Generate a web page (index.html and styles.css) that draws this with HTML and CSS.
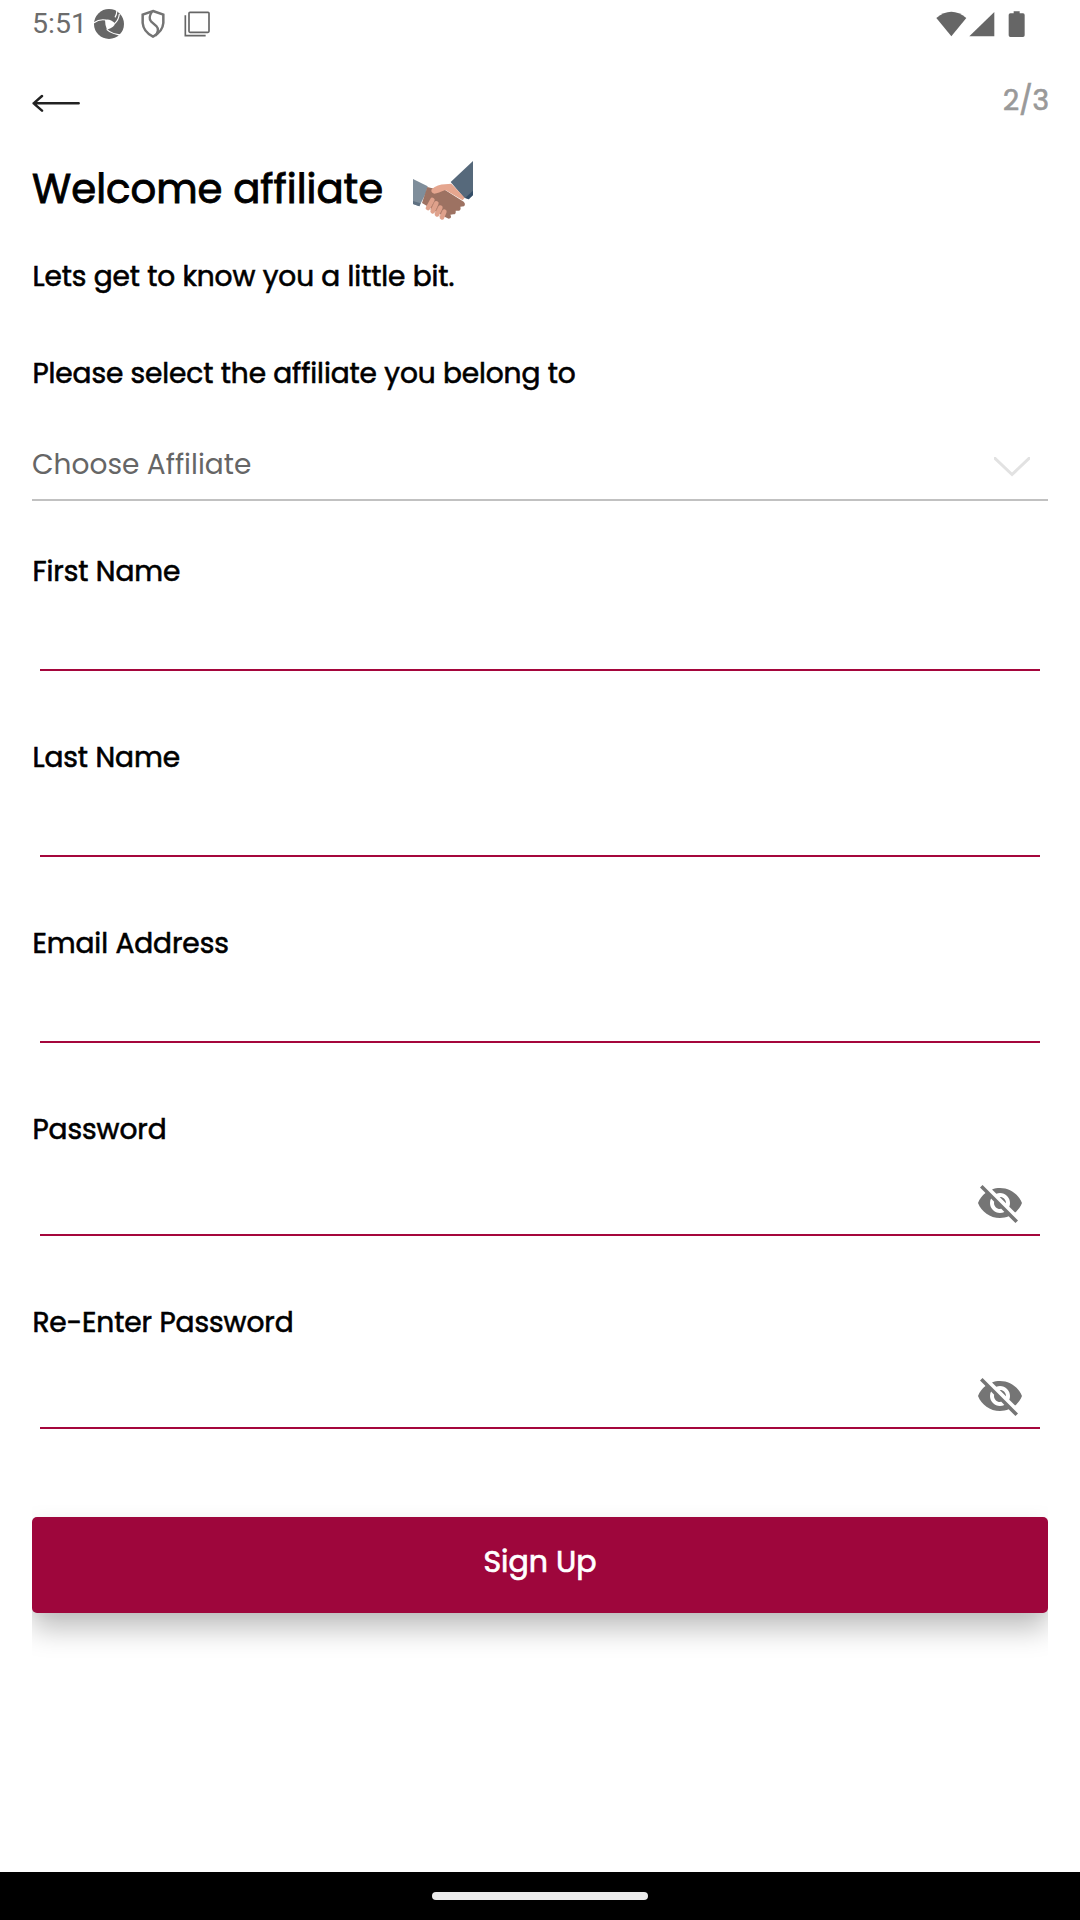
FILE: index.html
```html
<!DOCTYPE html>
<html lang="en">
<head>
<meta charset="utf-8">
<title>Sign Up</title>
<link rel="stylesheet" href="styles.css">
</head>
<body>
<div class="screen">
  <header class="status">
    <div class="status-left">
      <span class="clock">5:51</span>
      <svg class="ic-pinwheel" width="32" height="32" viewBox="0 0 96 96">
        <circle cx="48" cy="48" r="45" fill="#666"/>
        <path d="M36 35Q52 31 66 46Q66 57 42 65Q36 52 36 35Z" fill="#fff"/>
        <g fill="none" stroke="#fff" stroke-width="3.500"><path d="M3 44Q18 33 38 36"/><path d="M66 28Q71 20 72 7"/><path d="M65 47Q77 36 79 18"/><path d="M41 64Q56 79 92 82"/></g>
      </svg>
      <svg class="ic-shield" width="24" height="30" viewBox="0 0 72 90">
        <path d="M36 6 67 17V42Q65 68 36 83Q7 68 5 42V17Z" fill="none" stroke="#747474" stroke-width="7.500"/>
        <path d="M33 8Q21 26 30 37L46 51Q57 63 43 80" fill="none" stroke="#747474" stroke-width="7"/>
      </svg>
      <svg class="ic-copy" width="26" height="26" viewBox="0 0 78 78">
        <rect x="15" y="4" width="60" height="60" rx="3" fill="none" stroke="#666" stroke-width="5"/>
        <path d="M4 13V74H65" fill="none" stroke="#666" stroke-width="5"/>
      </svg>
    </div>
    <svg width="90" height="26" viewBox="0 0 270 78" fill="#666">
      <path d="M1 21Q46-17 91 21L46 76Z"/><path d="M100 76 175 3V76Z"/>
      <path d="M233 1H251V7H261Q266 7 266 12V73Q266 78 261 78H223Q218 78 218 73V12Q218 7 223 7H233Z"/>
    </svg>
  </header>

  <nav class="topbar">
    <svg width="50" height="20" viewBox="0 0 150 60" fill="none" stroke="#222" stroke-width="7.500" stroke-linecap="round" stroke-linejoin="round"><path d="M140 28H5M30 6 5 28 30 50"/></svg>
    <span class="step">2/3</span>
  </nav>

  <main class="content">
    <div class="title-row">
      <h1>Welcome affiliate</h1>
      <svg width="60" height="60" viewBox="69 62 180 180">
        <path d="M69 116 113 138 108 158 88 198 69 191Z" fill="#7f8e9b"/>
        <path d="M69 182 92 189 88 198 69 191Z" fill="#5f7182"/>
        <path d="M249 62V164L236 177 222 172 182 125Z" fill="#56697b"/>
        <path d="M249 151V164L236 177 226 172Z" fill="#344e68"/>
        <path d="M112 140 133 145 164 148 221 184Q228 191 222 198L211 199Q214 208 207 211L197 211Q199 222 190 222L181 223Q187 233 176 235L165 230 96 188Z" fill="#9d7262"/>
        <path d="M125 147Q143 132 165 132L184 130 224 172 218 180 166 149Q145 158 133 160 121 157 125 147Z" fill="#e5a68f"/>
        <g fill="none" stroke="#dfa18b" stroke-width="14" stroke-linecap="round"><path d="M127 179 114 203"/><path d="M139 189 128 213"/><path d="M151 202 141 222"/><path d="M163 214 156 231"/></g>
        <g fill="none" stroke="#c98c77" stroke-width="1.5"><path d="M133 184 121 209"/><path d="M146 196 134 219"/><path d="M158 209 148 229"/></g>
      </svg>
    </div>
    <p class="line intro">Lets get to know you a little bit.</p>
    <p class="line prompt">Please select the affiliate you belong to</p>
    <div class="select">
      <span class="line placeholder">Choose Affiliate</span>
      <svg width="36" height="20" viewBox="0 0 36 20" fill="none" stroke="#e2e2e2" stroke-width="3"><path d="M-1-.5 18 17.500 37-.5"/></svg>
    </div>

    <label class="field"><span class="line">First Name</span><span class="input"></span></label>
    <label class="field"><span class="line">Last Name</span><span class="input"></span></label>
    <label class="field"><span class="line">Email Address</span><span class="input"></span></label>
    <label class="field secret"><span class="line">Password</span><span class="input"><svg class="eye" width="48" height="48" viewBox="0 0 24 24"><path d="M12 7c2.760 0 5 2.240 5 5 0 .65-.13 1.260-.36 1.830l2.920 2.920c1.510-1.260 2.700-2.890 3.430-4.750-1.730-4.390-6-7.500-11-7.500-1.400 0-2.740.25-3.980.7l2.160 2.160C10.740 7.130 11.350 7 12 7zM2 4.270l2.280 2.280.46.46C3.080 8.300 1.780 10.020 1 12c1.730 4.390 6 7.500 11 7.500 1.550 0 3.030-.3 4.380-.84l.42.42L19.730 22 21 20.730 3.270 3 2 4.270zM7.530 9.800l1.550 1.550c-.05.21-.08.43-.08.65 0 1.660 1.340 3 3 3 .22 0 .44-.03.65-.08l1.550 1.550c-.67.33-1.410.53-2.200.53-2.760 0-5-2.240-5-5 0-.79.2-1.530.53-2.200zm4.310-.78l3.150 3.150.02-.16c0-1.660-1.340-3-3-3l-.17.010z"/></svg></span></label>
    <label class="field secret"><span class="line">Re-Enter Password</span><span class="input"><svg class="eye" width="48" height="48" viewBox="0 0 24 24"><path d="M12 7c2.760 0 5 2.240 5 5 0 .65-.13 1.260-.36 1.830l2.920 2.920c1.510-1.260 2.700-2.890 3.430-4.750-1.730-4.390-6-7.500-11-7.500-1.400 0-2.740.25-3.980.7l2.160 2.160C10.740 7.130 11.350 7 12 7zM2 4.270l2.280 2.280.46.46C3.080 8.300 1.780 10.020 1 12c1.730 4.390 6 7.500 11 7.500 1.550 0 3.030-.3 4.380-.84l.42.42L19.730 22 21 20.730 3.270 3 2 4.270zM7.530 9.800l1.550 1.550c-.05.21-.08.43-.08.65 0 1.660 1.340 3 3 3 .22 0 .44-.03.65-.08l1.550 1.550c-.67.33-1.410.53-2.200.53-2.760 0-5-2.240-5-5 0-.79.2-1.530.53-2.200zm4.310-.78l3.150 3.150.02-.16c0-1.660-1.340-3-3-3l-.17.010z"/></svg></span></label>

    <div class="action"><button class="signup">Sign Up</button></div>
  </main>

  <footer class="navbar"><span class="pill"></span></footer>
</div>
</body>
</html>
```

FILE: styles.css
```css
* { box-sizing: border-box; margin: 0; }
body { background: #fff; color: #000; font-family: Poppins, Inter, "Open Sans", sans-serif; }
svg { display: block; flex: none; }
.screen { width: 1080px; height: 1920px; display: flex; flex-direction: column; overflow: hidden; }

.status { height: 48px; padding: 0 54px 0 32px; display: flex; justify-content: space-between; align-items: center; }
.status-left { display: flex; align-items: center; }
.clock { width: 61px; font: 400 28.5px/48px Roboto, sans-serif; color: #6c6c6c; }
.ic-shield { margin-left: 16px; }
.ic-copy { margin-left: 19px; }

.topbar { height: 104px; padding: 0 31px 0 32px; display: flex; justify-content: space-between; }
.topbar svg { margin-top: 46px; }
.step { margin-top: 33px; font-size: 28px; font-weight: 400; line-height: 40px; color: #999; -webkit-text-stroke: .7px #999; }

.content { flex: 1; padding: 0 32px; }
.title-row { height: 105px; display: flex; align-items: flex-start; padding-top: 9px; }
h1 { width: 381px; padding-top: 2px; font-size: 40.2px; font-weight: 400; line-height: 53px; white-space: nowrap; -webkit-text-stroke: .9px #000; }
.line { display: block; padding-left: .4px; font-size: 28px; font-weight: 400; line-height: 40px; letter-spacing: -.1px; white-space: nowrap; -webkit-text-stroke: .6px #000; }
.field .line { letter-spacing: -.06px; }
.prompt { margin-top: 57px; }
.select { height: 58px; margin-top: 49px; border-bottom: 2px solid #c1c1c1; display: flex; justify-content: space-between; align-items: flex-start; }
.select svg { margin: 14px 18px 0 0; }
.placeholder { padding: 2px 0 0; color: #666; letter-spacing: 0; -webkit-text-stroke: 0; }
.field { display: block; height: 186px; padding-top: 51px; }
.input { display: flex; justify-content: flex-end; height: 79px; margin: 0 8px; border-bottom: 2px solid #a5063c; }
.secret { height: 193px; }
.secret .input { height: 86px; }
.eye { margin: 29px 16px 0 0; fill: #757575; }

.action { height: 155px; margin-top: 60px; padding-top: 12px; overflow: hidden; }
.signup { display: block; width: 100%; height: 96px; padding: 0 0 7px; border: 0; border-radius: 5px; background: #9e063c; color: #fff; font: 400 30px/40px Poppins, Inter, sans-serif; -webkit-text-stroke: .7px #fff; box-shadow: 0 16px 28px rgba(0,0,0,.25), 0 4px 10px rgba(0,0,0,.03); }

.navbar { height: 48px; padding-top: 20px; background: #000; display: flex; justify-content: center; }
.pill { width: 216px; height: 8px; border-radius: 4px; background: #ebebeb; }
```
